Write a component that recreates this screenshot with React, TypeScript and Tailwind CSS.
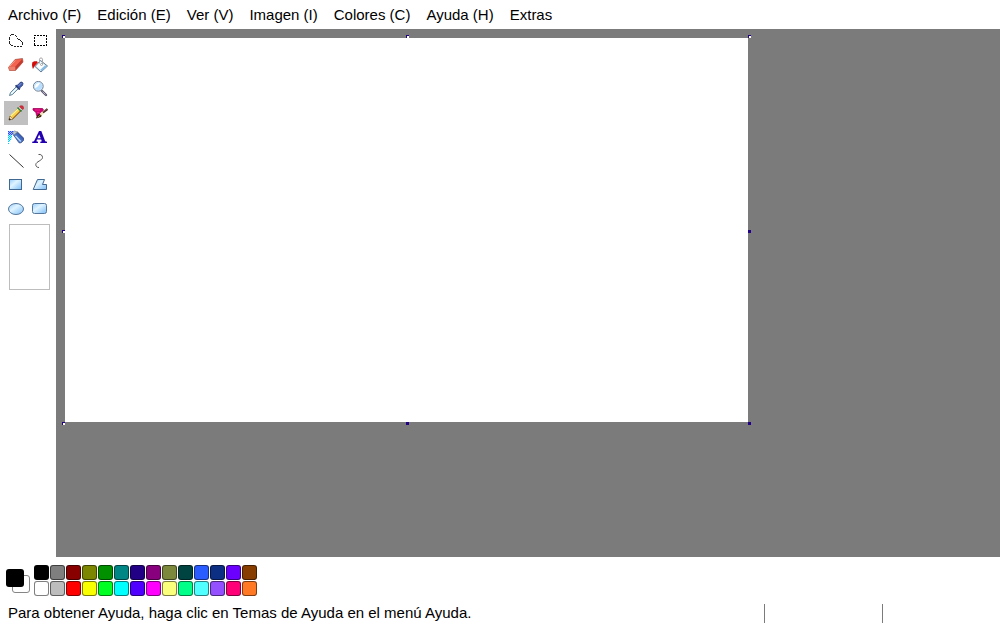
import { useState, type ReactNode } from "react";

const menus = ["Archivo (F)", "Edición (E)", "Ver (V)", "Imagen (I)", "Colores (C)", "Ayuda (H)", "Extras"];

const palette = [
  "#000000", "#7f7f7f", "#880000", "#7c8600", "#009000", "#008684", "#220086", "#88007e",
  "#7c883c", "#004442", "#2b5cff", "#0c2f84", "#6c00ff", "#883d00",
  "#ffffff", "#bdbdbd", "#ff0000", "#faff00", "#00ff22", "#00ffff", "#5000ff", "#ff00ff",
  "#faff7c", "#00ff88", "#50ffff", "#9450ff", "#ff0078", "#ff7824",
];

const tools: { name: string; icon: ReactNode }[] = [
  {
    name: "Selección de forma libre",
    icon: (
      <path
        d="M3 1H6V2H3ZM2 2H3V3H2ZM7 2H8V3H7ZM8 3H9V4H8ZM1 4H2V7H1ZM9 5H10V6H9ZM10 6H12V7H10ZM1 8H2V11H1ZM12 7H13V8H12ZM13 8H14V9H13ZM14 9H15V12H14ZM2 11H3V12H2ZM3 12H5V13H3ZM6 13H8V14H6ZM9 13H11V14H9ZM12 13H14V14H12Z"
        fill="#222"
      />
    ),
  },
  {
    name: "Selección",
    icon: (
      <path
        d="M2 2H4V3H2ZM5 2H7V3H5ZM8 2H10V3H8ZM11 2H13V3H11ZM14 2H15V4H14ZM2 12H4V13H2ZM5 12H7V13H5ZM8 12H10V13H8ZM11 12H13V13H11ZM14 11H15V13H14ZM2 4H3V6H2ZM2 7H3V9H2ZM2 10H3V12H2ZM14 5H15V7H14ZM14 8H15V10H14Z"
        fill="#000"
      />
    ),
  },
  {
    name: "Borrador",
    icon: (
      <>
        <path d="M.5 10.5 7 2.5 14.5 1.5 15 5 7.5 13.5H1.5Z" fill="#d64532" stroke="#a4564b" strokeWidth=".7" />
        <path d="M1 9.5 7 3 14 2 7.5 9.5Z" fill="#f26450" />
        <path d="M.8 9.5H7.5V13.2H1.5Z" fill="#ef806c" />
        <path d="M7.5 9.5 14.4 2.5V5.5L7.5 13Z" fill="#c23c30" />
        <path d="M2 9 7.2 3.5" stroke="#f89e8c" />
      </>
    ),
  },
  {
    name: "Relleno con color",
    icon: (
      <>
        <path d="M8.5 3.5 15.5 9 9 15 3 9.5Z" fill="#d8effb" stroke="#566c85" strokeWidth=".9" />
        <path d="M4.5 9 8.5 5 12.5 8.5 8.5 12.5Z" fill="#fff" />
        <path d="M9 13.5 14 9" stroke="#85bbe4" strokeWidth="2" />
        <path d="M5 4.5H2.2L.5 5.5 0 8 1 11.5 2.5 9 5.5 5.5Z" fill="#d90b09" stroke="#b00000" strokeWidth=".4" />
        <path d="M7.5 6.5V2.2C7.5.5 10.5.5 10.5 2.2V7" fill="none" stroke="#aaa" />
        <circle cx="9.5" cy="7.5" r="1" fill="#fff" stroke="#888" strokeWidth=".7" />
      </>
    ),
  },
  {
    name: "Seleccionar color",
    icon: (
      <>
        <path d="M1.5 14.5 2.5 11.5 8.5 5.5 10.5 7.5 4.5 13.5Z" fill="#c8eafa" stroke="#49697e" strokeWidth=".8" />
        <path d="M3 13 9 7" stroke="#fff" />
        <path d="M8 4.5 10 4 12 1.5 14 1 15 2.5 14.5 4.5 12 6.5 11.5 8.5Z" fill="#435fb0" stroke="#263873" strokeWidth=".8" />
        <path d="M7.5 4.5 11.5 8.5" stroke="#263873" strokeWidth="1.5" />
        <path d="M10.5 5 13.3 2.2" stroke="#8298df" />
      </>
    ),
  },
  {
    name: "Lupa",
    icon: (
      <>
        <path d="M10 10 14 14" stroke="#5c5870" strokeWidth="2.4" strokeLinecap="round" />
        <path d="M10.5 10.5 13.5 13.5" stroke="#b8b4ca" />
        <circle cx="6.3" cy="5.3" r="4.9" fill="#d5efff" stroke="#758397" />
        <circle cx="6.3" cy="5.3" r="3.8" fill="#b8dfff" />
        <path d="M3 6C3 3 5.5 1.5 8 2 6.5 5 5 6.5 3 7Z" fill="#fff" />
      </>
    ),
  },
  {
    name: "Lápiz",
    icon: (
      <>
        <path d="M1 15 2 11 10.5 2.5 13.5 5.5 5 14Z" fill="#f4d04b" stroke="#77511d" strokeWidth=".7" />
        <path d="M2.5 11 10.5 3.5" stroke="#fff59a" strokeWidth="1.4" />
        <path d="M5 13 12.5 5.5" stroke="#c17b20" />
        <path d="M2 11 5 14 1 15Z" fill="#ffe2af" stroke="#795a36" strokeWidth=".5" />
        <path d="M1 15 1.5 13 3 14.5Z" fill="#111" />
        <path d="M9.5 2.5 13.5 6.5" stroke="#2f7d45" strokeWidth="1.6" />
        <path d="M11 2.5 13.5 5" stroke="#d4f4d8" />
        <path d="M11.5 1.5 12.5 .8H14.5L15.5 2V4L14.3 4.5Z" fill="#d92b37" stroke="#a32232" strokeWidth=".5" />
      </>
    ),
  },
  {
    name: "Pincel",
    icon: (
      <>
        <path d="M1 3.5H10.5L11.5 5 8 8.5 6 10.5H4.5L4 7.5 1 5Z" fill="#d40076" stroke="#9f0556" strokeWidth=".8" strokeLinejoin="round" />
        <path d="M3 5H8M5 7.5H7.5" stroke="#f0318f" strokeWidth=".8" />
        <path d="M4 13.5C4.5 10.5 6 9.5 8 8.5L10 10.5C8.5 13 6.5 12.5 4 13.5Z" fill="#2e1c0c" />
        <path d="M5.5 12.3 8.5 10" stroke="#d79e52" strokeWidth=".8" />
        <path d="M8.5 9.8 11 7.5" stroke="#f2e2b8" strokeWidth="2.6" />
        <path d="M11 7.5 15.5 4" stroke="#4a241d" strokeWidth="2.2" />
        <path d="M11 6.8 15 3.8" stroke="#b78373" strokeWidth=".6" />
      </>
    ),
  },
  {
    name: "Aerógrafo",
    icon: (
      <>
        <path d="M0 2H6V6H0Z" fill="#a9b8fb" />
        <path d="M0 6H4V10H0ZM0 10H2V13H0Z" fill="#b8f1ff" />
        <path d="M0 2H1V3H0ZM2 2H3V3H2ZM4 2H5V3H4ZM1 3H2V4H1ZM3 3H4V4H3ZM0 4H1V5H0ZM2 4H3V5H2ZM4 4H5V5H4ZM1 5H2V6H1ZM3 5H4V6H3Z" fill="#2448ff" />
        <path d="M0 6H1V7H0ZM2 6H3V7H2ZM1 7H2V8H1ZM3 7H4V8H3ZM0 8H1V9H0ZM2 8H3V9H2ZM1 9H2V10H1ZM0 10H1V11H0ZM2 10H3V11H2ZM1 11H2V12H1ZM0 12H1V13H0ZM0 14H1V15H0Z" fill="#00caff" />
        <path d="M5.5 6 9.5 3 15.5 9V11.5L13 13.8H11Z" fill="url(#bottle)" stroke="#28386f" strokeWidth=".7" />
        <path d="M7.5 6.8 12.8 12.3" stroke="#cfe9ff" strokeWidth="1.2" />
        <path d="M4.5 3.5 6.5 2 9.5 3 6 6Z" fill="#bcc7ce" stroke="#70777d" strokeWidth=".6" />
      </>
    ),
  },
  {
    name: "Texto",
    icon: (
      <path
        d="M7 2H9.3L13.2 12.2 15 12.7V14H8.3V12.7L9.8 12.2 9.2 10.5H5L4.4 12.2 6 12.7V14H.2V12.7L2 12.2 6.3 3.6ZM7.2 5.4 5.5 9.2H8.7Z"
        fill="#2200b0"
        fillRule="evenodd"
      />
    ),
  },
  { name: "Línea", icon: <path d="M1.5 1.5 15.5 14.5" stroke="#333" /> },
  {
    name: "Curva",
    icon: <path d="M6.5 1.5C9 1 10.5 2.5 10.5 4.5 10.5 7.5 4 8.5 3.8 11.5 3.8 13.5 5 14.5 7 14.5" fill="none" stroke="#555" />,
  },
  { name: "Rectángulo", icon: <rect x="1.5" y="2.5" width="12" height="10" fill="url(#shape)" stroke="#416891" /> },
  { name: "Polígono", icon: <path d="M1.2 12.5 5.5 2.5H12.5L10.5 7.5H14.5V12.5Z" fill="url(#shape)" stroke="#416891" /> },
  { name: "Elipse", icon: <ellipse cx="8" cy="8" rx="7.5" ry="5.5" fill="url(#shape)" stroke="#55779b" /> },
  { name: "Rectángulo redondeado", icon: <rect x=".5" y="2.5" width="14" height="10" rx="2" fill="url(#shape)" stroke="#55779b" /> },
];

const handles = [
  { place: "left-0 top-0", active: false },
  { place: "left-[344px] top-0", active: false },
  { place: "right-0 top-0", active: false },
  { place: "left-0 top-[195px]", active: false },
  { place: "right-0 top-[195px]", active: true },
  { place: "left-0 bottom-0", active: false },
  { place: "bottom-0 left-[344px]", active: true },
  { place: "right-0 bottom-0", active: true },
];

function Toolbox() {
  const [selected, setSelected] = useState("Lápiz");
  return (
    <aside className="w-14 shrink-0 px-1">
      <svg className="absolute size-0" aria-hidden="true">
        <defs>
          <linearGradient id="shape" x2="1" y2="1">
            <stop stopColor="#94cbfb" />
            <stop offset=".4" stopColor="#e0f4ff" />
            <stop offset="1" stopColor="#7dbdf7" />
          </linearGradient>
          <linearGradient id="bottle" x1="0" y1="1" x2="1" y2="0">
            <stop stopColor="#6fb3ec" />
            <stop offset=".5" stopColor="#4a74cc" />
            <stop offset="1" stopColor="#1d2f78" />
          </linearGradient>
        </defs>
      </svg>
      <div className="grid grid-cols-2">
        {tools.map(({ name, icon }) => (
          <button
            key={name}
            type="button"
            aria-label={name}
            aria-pressed={selected === name}
            onClick={() => setSelected(name)}
            className={`flex size-6 items-center justify-center ${selected === name ? "bg-[#c0c0c0]" : ""}`}
          >
            <svg viewBox="0 0 16 16" className="size-4" aria-hidden="true">
              {icon}
            </svg>
          </button>
        ))}
      </div>
      <div className="mt-[3px] ml-[5px] h-[66px] w-[41px] border border-[#bdbdbd]" />
    </aside>
  );
}

function Palette() {
  const [color, setColor] = useState("#000000");
  return (
    <section className="flex gap-1 px-1.5 py-2" aria-label="Colores">
      <div className="relative mt-1 size-6">
        <div className="absolute right-0 bottom-0 size-[18px] rounded-[3px] border border-[#858585] bg-white" />
        <div className="absolute top-0 left-0 size-[18px] rounded-[3px] border border-black/50" style={{ backgroundColor: color }} />
      </div>
      <div className="grid grid-cols-14 gap-px">
        {palette.map((value) => (
          <button
            key={value}
            type="button"
            aria-label={value}
            onClick={() => setColor(value)}
            className="size-[15px] rounded-[3px] border border-black/50"
            style={{ backgroundColor: value }}
          />
        ))}
      </div>
    </section>
  );
}

export default function App() {
  return (
    <div className="flex h-screen flex-col overflow-hidden bg-white font-['Liberation_Sans',Arial,sans-serif] text-[15px] leading-5 text-black">
      <nav className="flex h-[29px] shrink-0 items-center">
        {menus.map((menu) => (
          <button key={menu} type="button" className="px-2">
            {menu}
          </button>
        ))}
      </nav>
      <main className="flex min-h-0 flex-1">
        <Toolbox />
        <div className="min-w-0 flex-1 overflow-hidden bg-[#7b7b7b] p-1.5">
          <div className="relative w-fit p-[3px]">
            <canvas width={683} height={384} className="block max-w-none bg-white" />
            {handles.map(({ place, active }) => (
              <span
                key={place}
                className={`absolute size-[3px] ${place} ${active ? "bg-[#220086]" : "border-t border-l border-[#220086] bg-white"}`}
              />
            ))}
          </div>
        </div>
      </main>
      <Palette />
      <footer className="flex h-[19px] shrink-0">
        <p className="flex-1 px-2 leading-[17px]">Para obtener Ayuda, haga clic en Temas de Ayuda en el menú Ayuda.</p>
        <div className="w-[118px] border-l border-[#7b7b7b]" />
        <div className="w-[118px] border-l border-[#7b7b7b]" />
      </footer>
    </div>
  );
}
